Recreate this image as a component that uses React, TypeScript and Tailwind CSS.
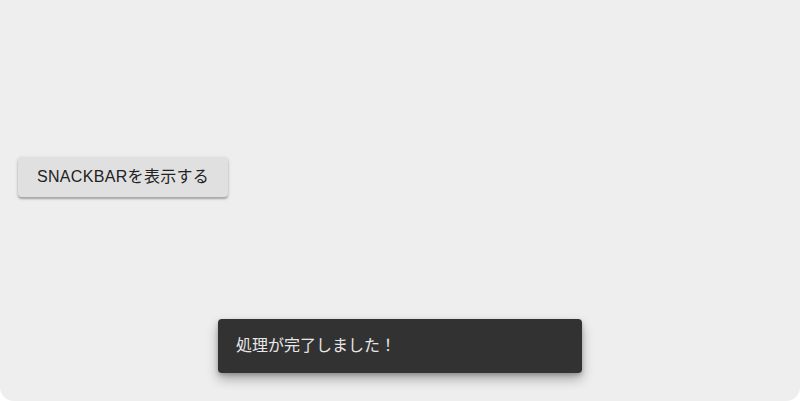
const App = () => {
  return (
    <div className="h-[401px] w-[800px] bg-white font-['Liberation_Sans','Noto_Sans_CJK_JP',sans-serif]">
      <div className="relative flex h-full w-full flex-col rounded-b-[14px] bg-[#eeeeee]">
        <div className="flex flex-1 items-center pl-[18px] pb-[48px]">
          <button className="h-[40px] rounded-[4px] bg-[#e0e0e0] px-[19px] text-[16px] tracking-[0.02em] text-[#222] shadow-[0_2px_2px_rgba(0,0,0,0.25),0_1px_4px_rgba(0,0,0,0.12)]">
            SNACKBARを表示する
          </button>
        </div>
        <div className="absolute bottom-[28px] left-[218px] flex h-[54px] w-[364px] items-center rounded-[4px] bg-[#323232] px-[18px] text-[16px] text-[#e8e8e8] shadow-[0_6px_12px_rgba(0,0,0,0.3),0_2px_4px_rgba(0,0,0,0.2)]">
          処理が完了しました！
        </div>
      </div>
    </div>
  );
};

export default App;
